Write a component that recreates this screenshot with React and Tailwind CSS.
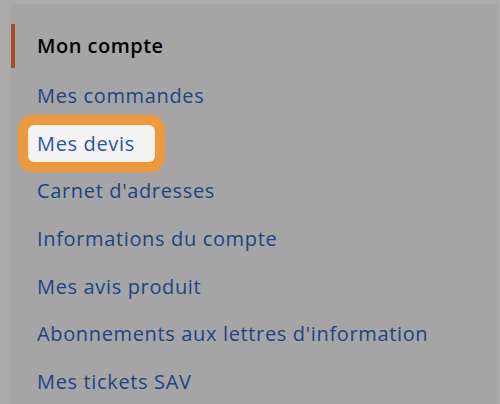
import React from 'react';

const links = [
  'Mes commandes',
  'Mes devis',
  "Carnet d'adresses",
  'Informations du compte',
  'Mes avis produit',
  "Abonnements aux lettres d'information",
  'Mes tickets SAV',
];

export default function App() {
  return (
    <div className="w-[500px] h-[404px] overflow-hidden bg-[#ababab] pt-[4px] pl-[11px] pr-[2px]" style={{ fontFamily: '"Open Sans", Lato, sans-serif' }}>
      <div className="h-full bg-[#a5a5a5] pt-[20px]">
        <ul className="text-[20px] tracking-[0.65px]">
          {/* current page */}
          <li className="h-[44px] mb-[4px] flex items-center pl-[22px] border-l-4 border-[#b04a22] font-semibold tracking-[0.5px] text-black">
            Mon compte
          </li>
          {links.map((label) => (
            <li key={label} className="h-[47.7px] flex items-center pl-[26px]">
              {label === 'Mes devis' ? (
                <span className="-ml-[9px] w-[127px] h-[37px] flex items-center pl-[9px] rounded-[6px] bg-[#f4f4f4] ring-[10px] ring-[#f0993a] text-[#2056b2]">
                  {label}
                </span>
              ) : (
                <span className="text-[#1c4483]">{label}</span>
              )}
            </li>
          ))}
        </ul>
      </div>
    </div>
  );
}
